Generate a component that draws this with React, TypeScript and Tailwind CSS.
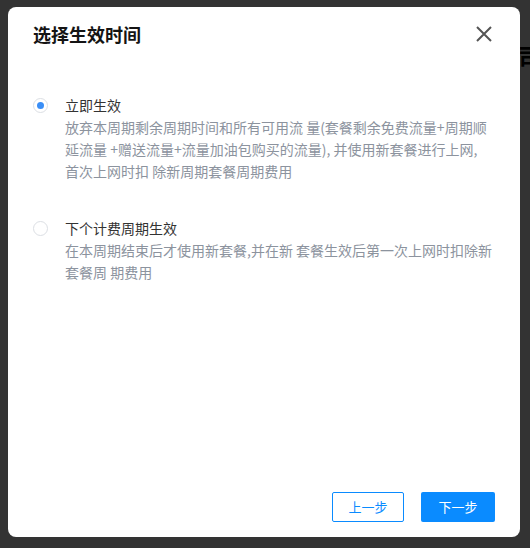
import React, { useState } from "react";

const font = { fontFamily: '"Noto Sans CJK SC", "Noto Sans", sans-serif' };

type Option = {
  id: string;
  title: string;
  lines: string[];
};

const options: Option[] = [
  {
    id: "now",
    title: "立即生效",
    lines: [
      "放弃本周期剩余周期时间和所有可用流 量(套餐剩余免费流量+周期顺",
      "延流量 +赠送流量+流量加油包购买的流量), 并使用新套餐进行上网,",
      "首次上网时扣 除新周期套餐周期费用",
    ],
  },
  {
    id: "next",
    title: "下个计费周期生效",
    lines: [
      "在本周期结束后才使用新套餐,并在新 套餐生效后第一次上网时扣除新",
      "套餐周 期费用",
    ],
  },
];

function Radio({ checked }: { checked: boolean }) {
  return (
    <span className="flex h-[22px] w-[32px] shrink-0 items-center">
      <span className="flex h-[15px] w-[15px] items-center justify-center rounded-full border border-[#dcdfe4] bg-white">
        {checked && <span className="h-[7px] w-[7px] rounded-full bg-[#3a8ef6]" />}
      </span>
    </span>
  );
}

export default function App() {
  const [selected, setSelected] = useState("now");

  return (
    <div className="relative h-[548px] w-[530px] overflow-hidden bg-white" style={font}>
      {/* page content behind the dialog */}
      <div className="absolute left-[518px] top-[41px] text-[24px] font-bold leading-[30px] text-black">
        司
      </div>

      {/* dimmed overlay */}
      <div className="absolute inset-0 bg-black/80 pl-[8px] pt-[7px]">
        <div className="flex h-[530px] w-[512px] flex-col rounded-lg bg-white">
          <div className="flex items-center justify-between pl-[25px] pr-[24px] pt-[15px]">
            <h2 className="text-[18px] font-bold leading-[24px] text-[#141414]">选择生效时间</h2>
            <button className="flex h-[24px] w-[24px] items-center justify-center text-[#555]">
              <svg width="16" height="16" viewBox="0 0 16 16" fill="none">
                <path d="M1 1L15 15M15 1L1 15" stroke="currentColor" strokeWidth="2" />
              </svg>
            </button>
          </div>

          <div className="mt-[48px] flex flex-col gap-[35px] pl-[25px] pr-[20px]">
            {options.map((o) => (
              <div
                key={o.id}
                className="flex cursor-pointer"
                onClick={() => setSelected(o.id)}
              >
                <Radio checked={selected === o.id} />
                <div className="flex flex-col text-[14px] leading-[22px]">
                  <div className="text-[#333]">{o.title}</div>
                  {o.lines.map((l, i) => (
                    <div key={i} className="whitespace-nowrap text-[#8c939e]">
                      {l}
                    </div>
                  ))}
                </div>
              </div>
            ))}
          </div>

          <div className="mt-auto flex justify-end gap-[17px] pb-[15px] pr-[25px]">
            <button className="flex h-[30px] w-[72px] items-center justify-center rounded-[2px] border border-[#0a8bff] bg-white text-[13px] text-[#0a8bff]">
              上一步
            </button>
            <button className="flex h-[30px] w-[74px] items-center justify-center rounded-[2px] bg-[#0a8bff] text-[13px] text-white">
              下一步
            </button>
          </div>
        </div>
      </div>
    </div>
  );
}
